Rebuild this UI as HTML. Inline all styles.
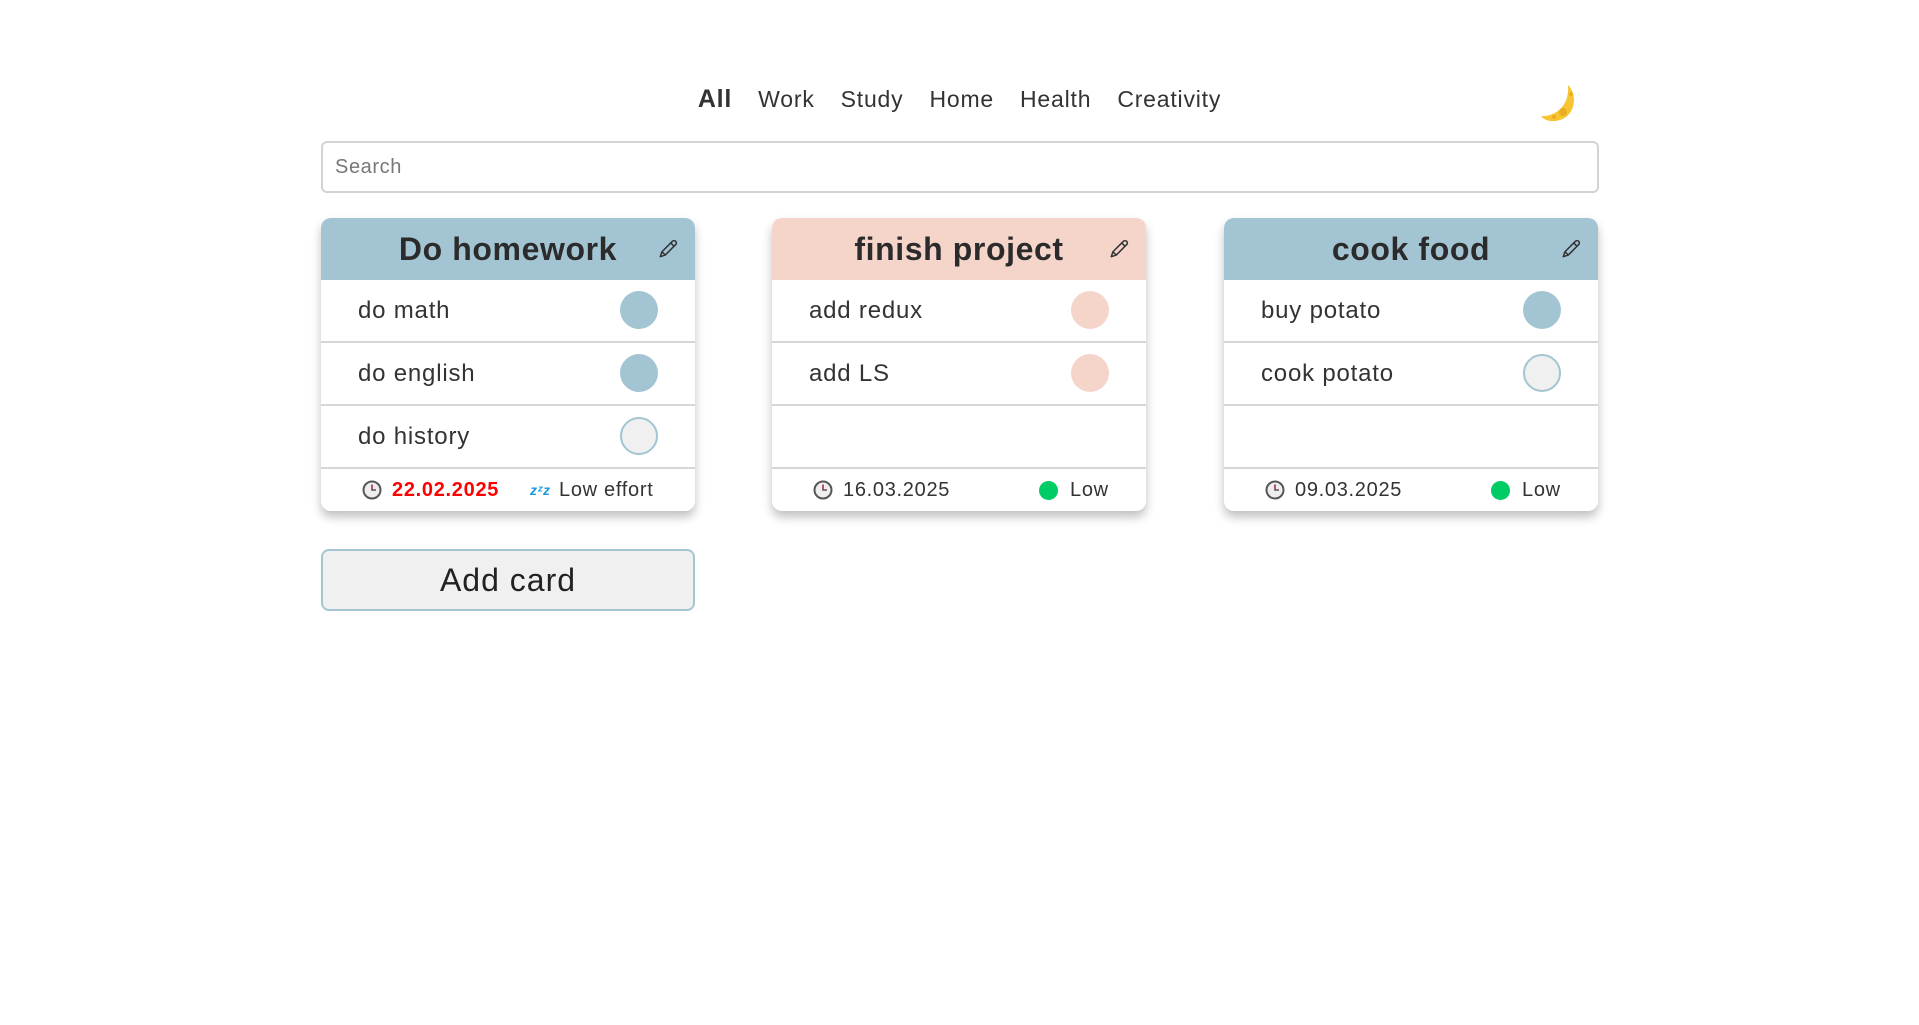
<!DOCTYPE html>
<html><head><meta charset="utf-8">
<style>
*{box-sizing:border-box;margin:0;padding:0}
body{width:1919px;height:1025px;background:#fff;font-family:"Liberation Sans",sans-serif;color:#333;position:relative;overflow:hidden}
.nav{position:absolute;top:85px;left:0;width:1919px;text-align:center;font-size:23px;color:#333;letter-spacing:0.8px}
.nav span{margin:0 13px}
.nav b{font-size:25px}
.moon{position:absolute;left:1540px;top:83px}
.search{position:absolute;left:321px;top:141px;width:1278px;height:52px;border:2px solid #d3d3d3;border-radius:6px;font-size:20px;letter-spacing:0.6px;color:#777;padding:13px 12px}
.card{position:absolute;top:218px;width:374px;height:293px;border-radius:10px;background:#fff;box-shadow:0 6px 10px rgba(0,0,0,.25);overflow:hidden}
.hd{height:62px;background:#a3c5d3;text-align:center;font-weight:bold;font-size:32px;letter-spacing:0.6px;line-height:62px;color:#2b2b2b;position:relative}
.hd.p{background:#f5d4ca}
.pen{position:absolute;right:16px;top:20px}
.row{height:63px;border-bottom:2px solid #d6d6d6;position:relative;font-size:24px;letter-spacing:0.8px;line-height:61px;padding-left:37px;color:#333}
.c{position:absolute;right:37px;top:11px;width:38px;height:38px;border-radius:50%;background:#a3c5d3}
.c.p{background:#f5d4ca}
.c.e{background:#f0f0f0;border:2px solid #a3c5d3}
.ft{position:absolute;top:251px;left:0;width:100%;height:42px;font-size:20px;letter-spacing:0.7px;line-height:42px}
.clk{position:absolute;top:11px}
.add{position:absolute;left:321px;top:549px;width:374px;height:62px;border:2px solid #a3c5d3;border-radius:8px;background:#f0f0f0;font-size:32px;letter-spacing:1px;text-align:center;line-height:58px;color:#222}
.dot{position:absolute;top:12px;width:19px;height:19px;border-radius:50%;background:#00cc66}
</style></head><body>
<div class="nav"><span><b>All</b></span><span>Work</span><span>Study</span><span>Home</span><span>Health</span><span>Creativity</span></div>
<svg class="moon" width="42" height="42" viewBox="0 0 42 42"><path d="M28 2 C40 14 34 40 10 38 C4 37 2 34 1 33 C14 34 30 24 28 2Z" fill="#f7c531"/><circle cx="23" cy="29" r="4" fill="#e8ad22"/><circle cx="14" cy="34" r="2" fill="#e8ad22"/><circle cx="31" cy="11" r="2" fill="#e8ad22"/></svg>
<div class="search">Search</div>

<svg width="0" height="0" style="position:absolute"><defs>
<symbol id="pen" viewBox="0 0 20 20"><path d="M3 17 L4.5 12.5 L14 3 Q15.5 1.8 17 3 Q18.2 4.5 17 6 L7.5 15.5 Z M4.5 12.5 L7.5 15.5 M12.5 4.5 L15.5 7.5" fill="none" stroke="#333" stroke-width="1.4" stroke-linejoin="round"/></symbol>
<symbol id="clk" viewBox="0 0 20 20"><circle cx="10" cy="10" r="8.5" fill="#eee" stroke="#555" stroke-width="2"/><path d="M10 4.5 V10 H14" fill="none" stroke="#555" stroke-width="1.6"/><path d="M10 5 V9.5" stroke="#d03060" stroke-width="1.4"/></symbol>
</defs></svg>

<div class="card" style="left:321px">
 <div class="hd">Do homework<svg class="pen" width="22" height="22"><use href="#pen"/></svg></div>
 <div class="row">do math<div class="c"></div></div>
 <div class="row">do english<div class="c"></div></div>
 <div class="row">do history<div class="c e"></div></div>
 <div class="ft"><svg class="clk" width="20" height="20" style="left:41px"><use href="#clk"/></svg><span style="position:absolute;left:71px;color:#ff0000;font-weight:bold">22.02.2025</span><span style="position:absolute;left:209px;color:#1a9be0;font-size:14px;font-weight:bold;font-style:italic">zᶻz</span><span style="position:absolute;left:238px">Low effort</span></div>
</div>

<div class="card" style="left:772px">
 <div class="hd p">finish project<svg class="pen" width="22" height="22"><use href="#pen"/></svg></div>
 <div class="row">add redux<div class="c p"></div></div>
 <div class="row">add LS<div class="c p"></div></div>
 <div class="row"></div>
 <div class="ft"><svg class="clk" width="20" height="20" style="left:41px"><use href="#clk"/></svg><span style="position:absolute;left:71px">16.03.2025</span><div class="dot" style="left:267px"></div><span style="position:absolute;left:298px">Low</span></div>
</div>

<div class="card" style="left:1224px">
 <div class="hd">cook food<svg class="pen" width="22" height="22"><use href="#pen"/></svg></div>
 <div class="row">buy potato<div class="c"></div></div>
 <div class="row">cook potato<div class="c e"></div></div>
 <div class="row"></div>
 <div class="ft"><svg class="clk" width="20" height="20" style="left:41px"><use href="#clk"/></svg><span style="position:absolute;left:71px">09.03.2025</span><div class="dot" style="left:267px"></div><span style="position:absolute;left:298px">Low</span></div>
</div>

<div class="add">Add card</div>
</body></html>
